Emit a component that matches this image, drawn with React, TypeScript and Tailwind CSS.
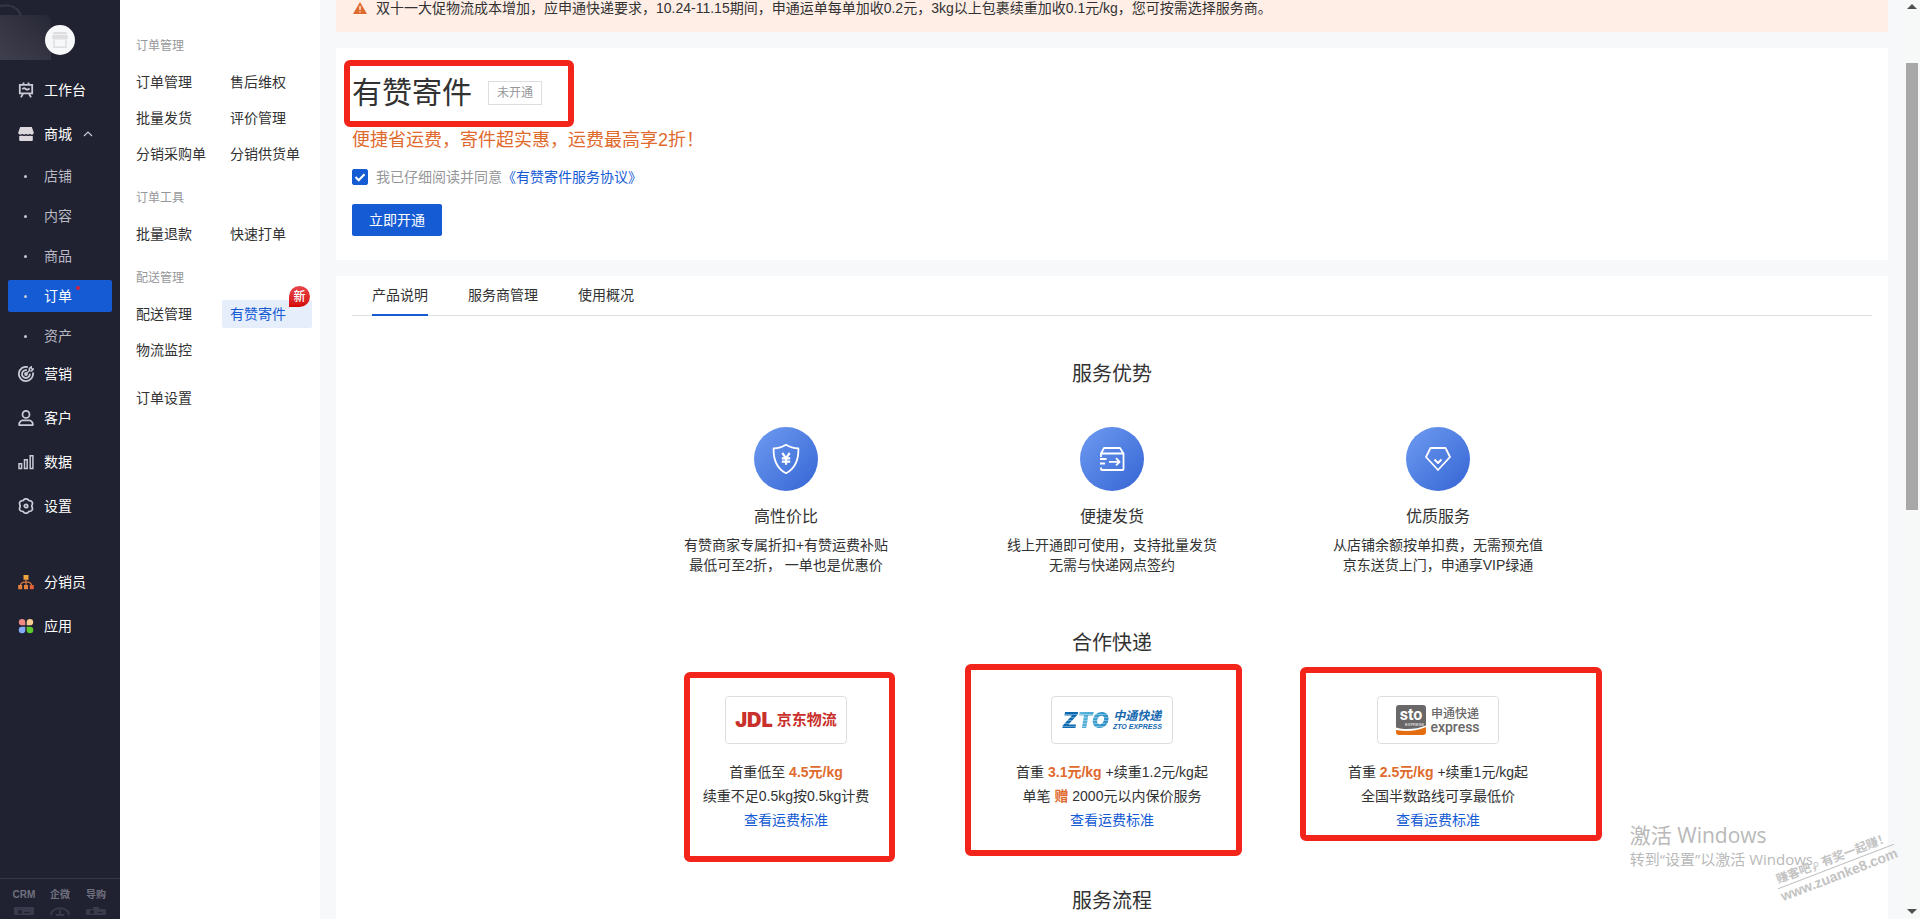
import React, { useState } from 'react';

interface SubLink {
  label: string;
  active?: boolean;
  badge?: string;
}

interface MenuGroup {
  title?: string;
  links: SubLink[];
}

const shopLinks = ['店铺', '内容', '商品', '订单', '资产'];

const menuGroups: MenuGroup[] = [
  {
    title: '订单管理',
    links: [
      { label: '订单管理' },
      { label: '售后维权' },
      { label: '批量发货' },
      { label: '评价管理' },
      { label: '分销采购单' },
      { label: '分销供货单' },
    ],
  },
  { title: '订单工具', links: [{ label: '批量退款' }, { label: '快速打单' }] },
  {
    title: '配送管理',
    links: [{ label: '配送管理' }, { label: '有赞寄件', active: true, badge: '新' }, { label: '物流监控' }],
  },
];

const tabs = ['产品说明', '服务商管理', '使用概况'];

/* ---------- Sidebar icons ---------- */

const iconProps = {
  width: 16,
  height: 16,
  viewBox: '0 0 16 16',
  fill: 'none',
  stroke: '#c9cad6',
  strokeWidth: 1.8,
  'aria-hidden': true,
};

const WorkbenchIcon = () => (
  <svg {...iconProps}>
    <path d="M1.8 2.8h12.4v8.6H1.8z" />
    <path d="M5.5.5v2M10.5.5v2M5 11.5l-2 3.8M11 11.5l2 3.8" />
    <path d="M4.3 7.3c1.2-1.7 2.3-1.3 3.5-.3s2.3 1 3.7-.6" />
  </svg>
);

const ShopIcon = () => (
  <svg {...iconProps} fill="#dcd8de" stroke="none">
    <path d="M2.2 1h11.6l1.9 5.2c.2 1.6-.6 2.5-1.9 2.5-1.1 0-1.5-.6-2.1-.6s-.9.6-1.9.6-1.2-.6-1.8-.6-.9.6-1.9.6-1.2-.6-1.9-.6-.9.6-2 .6C1 8.7.1 7.8.3 6.2z" />
    <path d="M1.2 10c1.3.2 2-.3 3-.5 1.6.8 2.6.7 3.8 0 1.4.7 2.4.8 3.8 0 1 .4 1.7.6 3 .5v4a1 1 0 0 1-1 1H2.2a1 1 0 0 1-1-1z" />
  </svg>
);

const TargetIcon = () => (
  <svg {...iconProps}>
    <path d="M9.8 1.1A7.1 7.1 0 1 0 14.9 6.5" />
    <path d="M8.9 4.3A3.9 3.9 0 1 0 11.8 7.6" />
    <circle cx="8" cy="8" r="1" fill="#c9cad6" />
    <path d="M8 8l4-4M11.3 4.7V2.3L13.3.8v2.1h2.1l-1.7 2z" strokeWidth="1.4" />
  </svg>
);

const UserIcon = () => (
  <svg {...iconProps}>
    <circle cx="8" cy="4.4" r="3.5" />
    <path d="M4.6 10.4h6.8c1.8 0 3.5 2.2 3.5 4 0 .6-.3.8-.8.8H1.9c-.5 0-.8-.2-.8-.8 0-1.800 1.700-4 3.500-4z" />
  </svg>
);

const ChartIcon = () => (
  <svg {...iconProps} strokeWidth="1.5">
    <path d="M1 9.8h2.600v4.600H1zM6.500 5.800h2.700v8.600H6.500zM12.200 1.700h2.700v12.700h-2.700z" />
  </svg>
);

const GearIcon = () => (
  <svg {...iconProps}>
    <path d="M5.600 2.100C6.700.4 9.300.4 10.400 2.100q.3.500 1 .5c2.500 0 3.700 2 2.700 4.200q-.3.600-.3 1.200t.3 1.200c1 2.200-.2 4.200-2.700 4.200q-.7 0-1 .5c-1.100 1.700-3.700 1.700-4.800 0q-.3-.5-1-.5c-2.500 0-3.700-2-2.700-4.200q.3-.6.3-1.200t-.3-1.200c-1-2.200.2-4.200 2.700-4.200q.7 0 1-.5z" />
    <circle cx="8" cy="8" r="1.700" />
  </svg>
);

const TreeIcon = () => (
  <svg {...iconProps} stroke="#d9793f" strokeWidth="1.2">
    <path d="M5.5 1h5v4.8h-5z" fill="#f0a63c" stroke="none" />
    <path d="M8 5v7M2.2 12c.2-3 2.600-4.200 5.800-4.200s5.600 1.200 5.800 4.200" />
    <path d="M.2 11h4v4.200h-4zM6 11h4v4.200H6z" fill="#e5823a" stroke="none" />
    <path d="M11.8 11h4v4.200h-4z" fill="#e4603a" stroke="none" />
  </svg>
);

const AppsIcon = () => (
  <svg {...iconProps} stroke="none">
    <path d="M4 1a3.300 3.300 0 0 1 3.300 3.300v3H4A3.100 3.100 0 0 1 4 1z" fill="#ee8a86" />
    <path d="M12 1a3.100 3.100 0 0 1 0 6.300H8.700v-3A3.300 3.300 0 0 1 12 1z" fill="#fbcd92" />
    <path d="M4 8.700h3.300v3A3.300 3.300 0 1 1 4 8.700z" fill="#84a9f5" />
    <path d="M8.700 8.700H12a3.300 3.300 0 1 1-3.300 3.300z" fill="#5cc92e" />
  </svg>
);

/* ---------- Advantage icons ---------- */

const ShieldIcon = () => (
  <svg width="32" height="32" viewBox="0 0 32 32" fill="none" stroke="#fff" strokeWidth="1.8" strokeLinejoin="round" aria-hidden="true">
    <path d="M16 1.800c3.500 2.200 7.600 3.500 12.400 3.600.3 11.500-3.300 20-12.400 24.800C6.900 25.400 3.300 16.900 3.600 5.400 8.400 5.300 12.500 4 16 1.800z" />
    <path d="M12.300 10l3.700 5.200 3.700-5.200M11.800 15.400h8.400M11.800 18.700h8.400M16 15.200v6.500" strokeWidth="2.2" />
  </svg>
);

const BoxIcon = () => (
  <svg width="32" height="32" viewBox="0 0 32 32" fill="none" stroke="#fff" strokeWidth="1.8" strokeLinejoin="round" aria-hidden="true">
    <path d="M5 14V10.500L8 5h16l3.500 5.500V26a1 1 0 0 1-1 1H6a1 1 0 0 1-1-1v-1.500M5 10.500h22.500" />
    <path d="M4 16h6.500M4 20.500h5M13 18.800h10.500M20 15.200l3.600 3.600-3.600 3.600" />
  </svg>
);

const DiamondIcon = () => (
  <svg width="32" height="32" viewBox="0 0 32 32" fill="none" stroke="#fff" strokeWidth="1.8" strokeLinejoin="round" aria-hidden="true">
    <path d="M8.500 5h15L28 14 16 27 4 14z" />
    <path d="M12.500 16.500l3.500 3.500 3.500-3.500" strokeWidth="2" />
  </svg>
);

const advantages = [
  { title: '高性价比', icon: <ShieldIcon />, lines: ['有赞商家专属折扣+有赞运费补贴', '最低可至2折， 一单也是优惠价'] },
  { title: '便捷发货', icon: <BoxIcon />, lines: ['线上开通即可使用，支持批量发货', '无需与快递网点签约'] },
  { title: '优质服务', icon: <DiamondIcon />, lines: ['从店铺余额按单扣费，无需预充值', '京东送货上门，申通享VIP绿通'] },
];

/* ---------- Courier logos ---------- */

const JdlLogo = () => (
  <div className="flex items-center gap-1 whitespace-nowrap text-[#c9302b]">
    <span className="font-[Inter] text-xl leading-5 font-black">JDL</span>
    <span className="text-[15px] leading-5 font-bold">京东物流</span>
  </div>
);

const ZtoLogo = () => (
  <div className="flex items-center whitespace-nowrap text-[#1668b0] italic">
    <span className="bg-[repeating-linear-gradient(180deg,transparent_0px,transparent_2px,rgba(255,255,255,0.35)_2px,rgba(255,255,255,0.35)_3px),linear-gradient(100deg,#0d6ab0_0%,#0d6ab0_32%,#5fb8dc_34%,#3fa0d0_64%,#1f84c0_100%)] bg-clip-text pr-1 font-[Inter] text-[22px] leading-7 font-black text-transparent">
      ZTO
    </span>
    <span className="flex flex-col">
      <span className="text-[12px] leading-[14px] font-bold">中通快递</span>
      <span className="text-[7px] leading-2 font-bold">ZTO EXPRESS</span>
    </span>
  </div>
);

const StoLogo = () => (
  <div className="flex items-center gap-1 whitespace-nowrap text-[#6a6768]">
    <svg width="30" height="30" viewBox="0 0 30 30" aria-hidden="true">
      <path d="M3 0h24a3 3 0 0 1 3 3v17.500C21 24 10 25.500 0 22.500V3a3 3 0 0 1 3-3z" fill="#6a6768" />
      <path d="M0 25c11 2 21 1 30-3v5a3 3 0 0 1-3 3H3a3 3 0 0 1-3-3z" fill="#e36d10" />
      <text x="15" y="15" textAnchor="middle" fontFamily="Roboto" fontSize="16" fontWeight="700" fill="#fff">
        sto
      </text>
      <text x="28" y="21" textAnchor="end" fontFamily="Liberation Sans" fontSize="4" fill="#fff">
        EXPRESS
      </text>
    </svg>
    <span className="flex flex-col">
      <span className="text-xs leading-[14px] font-medium">申通快递</span>
      <span className="font-[Roboto] text-sm leading-3 font-medium">express</span>
    </span>
  </div>
);

const couriers = [
  {
    name: 'jdl',
    logo: <JdlLogo />,
    lines: [
      <>首重低至 <b className="text-[#df6a2d]">4.5元/kg</b></>,
      <>续重不足0.5kg按0.5kg计费</>,
    ],
    mark: '-top-6 left-[61px] h-[190px] w-[211px]',
  },
  {
    name: 'zto',
    logo: <ZtoLogo />,
    lines: [
      <>首重 <b className="text-[#df6a2d]">3.1元/kg</b> +续重1.2元/kg起</>,
      <>单笔 <b className="text-[#df6a2d]">赠</b> 2000元以内保价服务</>,
    ],
    mark: '-top-8 left-4 h-[192px] w-[277px]',
  },
  {
    name: 'sto',
    logo: <StoLogo />,
    lines: [
      <>首重 <b className="text-[#df6a2d]">2.5元/kg</b> +续重1元/kg起</>,
      <>全国半数路线可享最低价</>,
    ],
    mark: '-top-[29px] left-[25px] h-[174px] w-[302px]',
  },
];

const NavItem: React.FC<{ icon: React.ReactNode; label: string; open?: boolean }> = ({ icon, label, open }) => (
  <a href="#" className="flex h-11 items-center pl-[18px] text-sm text-white">
    {icon}
    <span className="ml-[10px]">{label}</span>
    {open && (
      <svg width="10" height="6" viewBox="0 0 10 6" fill="none" stroke="#c9cad6" strokeWidth="1.2" className="ml-[11px]" aria-hidden="true">
        <path d="M1 5l4-4 4 4" />
      </svg>
    )}
  </a>
);

const Sidebar = () => (
  <aside className="relative flex w-[120px] shrink-0 flex-col overflow-hidden bg-[#202131]">
    <div className="relative h-[68px] shrink-0">
      <svg width="60" height="62" viewBox="0 0 60 62" className="absolute top-0 left-0" aria-hidden="true">
        <defs>
          <linearGradient id="bag" x1="0" y1="1" x2="1" y2="0">
            <stop offset="0" stopColor="#403f4d" />
            <stop offset="1" stopColor="#272837" />
          </linearGradient>
        </defs>
        <path d="M0 15h47l4 5v40H0z" fill="url(#bag)" />
        <path d="M0 6c10-2 18 1 21 10" fill="none" stroke="#333444" strokeWidth="2.5" />
      </svg>
      <div className="absolute top-[25px] left-[45px] flex size-[30px] items-center justify-center rounded-full bg-[#f7f8fa]">
        <svg width="16" height="16" viewBox="0 0 16 16" aria-hidden="true">
          <path d="M1.5 0h13L16 5.500c0 1.500-1 2-2 2H2c-1 0-2-.5-2-2z" fill="#dedee0" />
          <path d="M2 8v7.200h12V8" fill="none" stroke="#dedee0" strokeWidth="1.5" />
          <path d="M1 2.500h14" stroke="#f1f1f3" />
        </svg>
      </div>
    </div>
    <nav>
      <NavItem icon={<WorkbenchIcon />} label="工作台" />
      <NavItem icon={<ShopIcon />} label="商城" open />
      <ul className="flex flex-col gap-2 px-2 pt-1">
        {shopLinks.map(label => (
          <li key={label}>
            <a
              href="#"
              className={`flex h-8 items-center rounded-xs pl-4 text-sm ${label === '订单' ? 'bg-[#155bd4] text-white' : 'text-[#b9bac4]'}`}
            >
              <span className="size-[3px] rounded-full bg-[#c9cad6]" />
              <span className="relative ml-[17px]">
                {label}
                {label === '订单' && <span className="absolute top-0 -right-2 size-1 rounded-full bg-[#d4213d]" />}
              </span>
            </a>
          </li>
        ))}
      </ul>
      <NavItem icon={<TargetIcon />} label="营销" />
      <NavItem icon={<UserIcon />} label="客户" />
      <NavItem icon={<ChartIcon />} label="数据" />
      <NavItem icon={<GearIcon />} label="设置" />
      <div className="mt-8">
        <NavItem icon={<TreeIcon />} label="分销员" />
        <NavItem icon={<AppsIcon />} label="应用" />
      </div>
    </nav>

    {/* Bottom shortcuts, cut off by the window edge */}
    <div className="mt-auto h-[41px] shrink-0 overflow-hidden border-t border-[#363748] px-[6px] pt-2">
      <div className="grid grid-cols-3 text-center text-[10px] leading-4 font-bold text-[#70717f]">
        <span>CRM</span>
        <span>企微</span>
        <span>导购</span>
      </div>
      <div className="mt-1 grid grid-cols-3 justify-items-center">
        <svg width="20" height="14" viewBox="0 0 20 14" aria-hidden="true">
          <rect width="20" height="8" rx="1" fill="#393a4b" />
          <circle cx="6" cy="5" r="2" fill="#202131" />
          <path d="M10 5.500h6" stroke="#202131" />
        </svg>
        <svg width="20" height="14" viewBox="0 0 20 14" fill="none" stroke="#393a4b" strokeWidth="2" aria-hidden="true">
          <path d="M1 8c1-9 17-9 18 0M10 3v6M6 8h8" />
        </svg>
        <svg width="20" height="14" viewBox="0 0 20 14" aria-hidden="true">
          <path d="M0 2h7V0h6v2h7v6H0z" fill="#393a4b" />
          <circle cx="6" cy="5" r="2" fill="#202131" />
          <path d="M12 5.500h4" stroke="#202131" />
        </svg>
      </div>
    </div>
  </aside>
);

const SubMenu = () => (
  <nav className="w-[200px] shrink-0 bg-white px-2 pt-4">
    {menuGroups.map(group => (
      <section key={group.title}>
        <h2 className="mt-5 mb-3 pl-2 text-xs leading-5 text-[#969799]">{group.title}</h2>
        <ul className="grid grid-cols-2 gap-x-1 gap-y-2">
          {group.links.map(link => (
            <li key={link.label} className="relative">
              <a
                href="#"
                className={`flex h-7 items-center rounded-xs pl-2 text-sm whitespace-nowrap ${link.active ? 'bg-[#e6eefb] text-[#155bd4]' : 'text-[#323233]'}`}
              >
                {link.label}
              </a>
              {link.badge && (
                <span className="absolute -top-[14px] right-[2px] flex size-[21px] items-center justify-center rounded-full rounded-bl-none bg-linear-to-b from-[#e8434a] to-[#d40000] text-xs font-medium text-white">
                  {link.badge}
                </span>
              )}
            </li>
          ))}
        </ul>
      </section>
    ))}
    <a href="#" className="mt-5 flex h-7 items-center pl-2 text-sm text-[#323233]">
      订单设置
    </a>
  </nav>
);

const App: React.FC = () => {
  const [agreed, setAgreed] = useState(true);
  const [tab, setTab] = useState(tabs[0]);

  return (
    <div className="relative flex h-screen overflow-hidden bg-[#f7f8fa] font-['Liberation_Sans','Noto_Sans_CJK_SC',sans-serif] text-sm text-[#323233]">
      <Sidebar />
      <SubMenu />

      <main className="min-w-0 flex-1 overflow-hidden px-4">
        {/* Notice */}
        <div className="flex h-8 bg-[#ffeee6] px-4 leading-4">
          <svg width="16" height="16" viewBox="0 0 16 16" className="mr-2" aria-hidden="true">
            <path d="M8 2l7 12H1z" fill="#df6a2d" />
            <path d="M8 6v4M8 11.200v1.400" stroke="#ffeee6" strokeWidth="1.4" />
          </svg>
          <p>双十一大促物流成本增加，应申通快递要求，10.24-11.15期间，申通运单每单加收0.2元，3kg以上包裹续重加收0.1元/kg，您可按需选择服务商。</p>
        </div>

        {/* Intro */}
        <section className="relative mt-4 bg-white px-4 py-6">
          <div className="flex h-[42px] items-center gap-4">
            <h1 className="text-[30px] leading-[42px]">有赞寄件</h1>
            <span className="flex h-6 w-[54px] items-center justify-center border border-[#dcdee0] text-xs text-[#969799]">未开通</span>
          </div>
          <div className="pointer-events-none absolute top-3 left-2 h-[67px] w-[230px] rounded-md border-6 border-[#f3251b]" />
          <p className="mt-3 text-lg leading-7 text-[#df6a2d]">便捷省运费，寄件超实惠，运费最高享2折！</p>
          <div className="mt-[13px] flex h-5 items-center">
            <span className="relative mr-2 size-4">
              <input
                id="agree"
                type="checkbox"
                checked={agreed}
                onChange={e => setAgreed(e.target.checked)}
                className="peer block size-4 appearance-none rounded-xs border border-[#155bd4] bg-white checked:bg-[#155bd4]"
              />
              <svg
                viewBox="0 0 16 16"
                fill="none"
                stroke="#fff"
                strokeWidth="2"
                className="pointer-events-none absolute inset-0 hidden size-4 peer-checked:block"
                aria-hidden="true"
              >
                <path d="M3.500 8l3.200 3.200 5.800-6" />
              </svg>
            </span>
            <label htmlFor="agree" className="text-[#969799]">我已仔细阅读并同意</label>
            <a href="#" className="text-[#155bd4]">《有赞寄件服务协议》</a>
          </div>
          <button className="mt-[17px] block h-8 w-[90px] rounded-xs bg-[#155bd4] text-white">立即开通</button>
        </section>

        <section className="mt-4 bg-white px-4">
          <div className="flex gap-10 border-b border-[#dcdee0] pl-5">
            {tabs.map(t => (
              <button
                key={t}
                onClick={() => setTab(t)}
                className={`-mb-px h-10 border-b-2 ${t === tab ? 'border-[#155bd4]' : 'border-transparent'}`}
              >
                {t}
              </button>
            ))}
          </div>

          <div className="mx-auto max-w-[978px] text-center">
            <h2 className="mt-11 text-xl leading-7">服务优势</h2>
            <div className="mt-[39px] grid grid-cols-3">
              {advantages.map(item => (
                <div key={item.title} className="flex flex-col items-center">
                  <div className="flex size-16 items-center justify-center rounded-full bg-linear-to-br from-[#6f9bf0] to-[#3564d4]">{item.icon}</div>
                  <h3 className="mt-[14px] text-base leading-6">{item.title}</h3>
                  <div className="mt-[6px] leading-5">
                    {item.lines.map(line => (
                      <p key={line}>{line}</p>
                    ))}
                  </div>
                </div>
              ))}
            </div>

            <h2 className="mt-[54px] text-xl leading-7">合作快递</h2>
            <div className="mt-[39px] grid grid-cols-3">
              {couriers.map(c => (
                <div key={c.name} className="relative flex flex-col items-center">
                  <div className="flex h-12 w-[122px] items-center justify-center rounded border border-[#dcdee0]">{c.logo}</div>
                  <div className="mt-4 leading-6">
                    {c.lines.map((line, i) => (
                      <p key={i}>{line}</p>
                    ))}
                    <a href="#" className="text-[#155bd4]">查看运费标准</a>
                  </div>
                  <div className={`pointer-events-none absolute rounded-md border-6 border-[#f3251b] ${c.mark}`} />
                </div>
              ))}
            </div>

            <h2 className="mt-[55px] pb-10 text-xl leading-7">服务流程</h2>
          </div>
        </section>
      </main>

      {/* Scrollbar */}
      <div className="flex w-4 shrink-0 flex-col items-center bg-[#f7f8f8]">
        <svg width="10" height="5" viewBox="0 0 10 5" className="mt-1" aria-hidden="true">
          <path d="M5 0l5 5H0z" fill="#505050" />
        </svg>
        <div className="mt-[54px] h-[447px] w-3 bg-[#a8a8a8]" />
        <svg width="10" height="5" viewBox="0 0 10 5" className="mt-auto mb-[5px]" aria-hidden="true">
          <path d="M0 0h10L5 5z" fill="#505050" />
        </svg>
      </div>

      {/* System activation notice */}
      <div className="pointer-events-none absolute right-[92px] bottom-12 font-['Open_Sans','Noto_Sans_CJK_SC',sans-serif] text-[#b9b9b9]">
        <p className="text-[21px] leading-6">激活 Windows</p>
        <p className="text-[15px] leading-6">转到“设置”以激活 Windows。</p>
      </div>

      {/* Site watermark */}
      <div className="pointer-events-none absolute right-[22px] bottom-9 w-[124px] -rotate-[21deg] text-center font-bold whitespace-nowrap text-[#c3c3c3]">
        <p className="border-b border-[#c3c3c3] text-xs leading-4">赚客吧，有奖一起赚！</p>
        <p className="text-sm leading-4">www.zuanke8.com</p>
      </div>
    </div>
  );
};

export default App;
